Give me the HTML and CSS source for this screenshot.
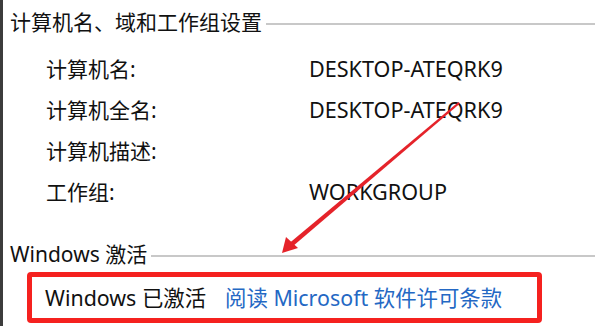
FILE: index.html
```html
<!DOCTYPE html>
<html lang="zh-CN">
<head>
<meta charset="utf-8">
<link rel="stylesheet" href="styles.css">
</head>
<body>
<div class="page">
  <div class="group-head"><span>计算机名、域和工作组设置</span><i class="rule"></i></div>
  <div class="rows">
    <div class="row"><span class="label">计算机名:</span><span class="value">DESKTOP-ATEQRK9</span></div>
    <div class="row"><span class="label">计算机全名:</span><span class="value">DESKTOP-ATEQRK9</span></div>
    <div class="row"><span class="label">计算机描述:</span><span class="value"></span></div>
    <div class="row"><span class="label">工作组:</span><span class="value">WORKGROUP</span></div>
  </div>
  <div class="group-head second"><span>Windows 激活</span><i class="rule"></i></div>
  <div class="activation">
    <span class="status">Windows 已激活</span>
    <span class="link">阅读 Microsoft 软件许可条款</span>
  </div>
  <svg class="arrow" width="595" height="326" viewBox="0 0 595 326">
    <polygon points="458.5,102 460,103.5 292.5,246.5 289.5,243" fill="#e5232a"/>
    <polygon points="282,253 286,237 298,248" fill="#e5232a"/>
  </svg>
</div>
</body>
</html>
```

FILE: styles.css
```css
html, body {
  margin: 0;
  padding: 0;
  background: #fff;
}
body {
  font-family: "Noto Sans", "Noto Sans CJK SC", "Microsoft YaHei", sans-serif;
  color: #111;
}
.page {
  position: relative;
  width: 595px;
  height: 326px;
  border-left: 3px solid #3c3c3c;
  box-sizing: border-box;
  overflow: hidden;
}
.group-head {
  display: flex;
  align-items: center;
  gap: 4px;
  margin: 8px 0 0 7px;
  height: 28px;
  font-size: 21px;
  line-height: 28px;
  white-space: nowrap;
}
.group-head .rule {
  flex: 1;
  height: 2px;
  background: #c8c8c8;
  margin-top: 4px;
}
.group-head.second {
  margin-top: 28px;
}
.rows {
  margin-top: 12px;
  padding-left: 43px;
}
.row {
  display: grid;
  grid-template-columns: 263px auto;
  height: 41px;
  align-items: center;
  font-size: 21px;
  line-height: 28px;
}
.value {
  font-size: 21.6px;
}
.activation {
  display: flex;
  align-items: center;
  gap: 19px;
  margin: 4px 0 0 24px;
  width: 515px;
  height: 51px;
  box-sizing: border-box;
  border: 5px solid #f5211f;
  border-radius: 4px;
  padding-left: 13px;
  font-size: 21.4px;
  line-height: 28px;
  white-space: nowrap;
}
.link {
  color: #2468c4;
}
.arrow {
  position: absolute;
  left: -3px;
  top: 0;
}
```
